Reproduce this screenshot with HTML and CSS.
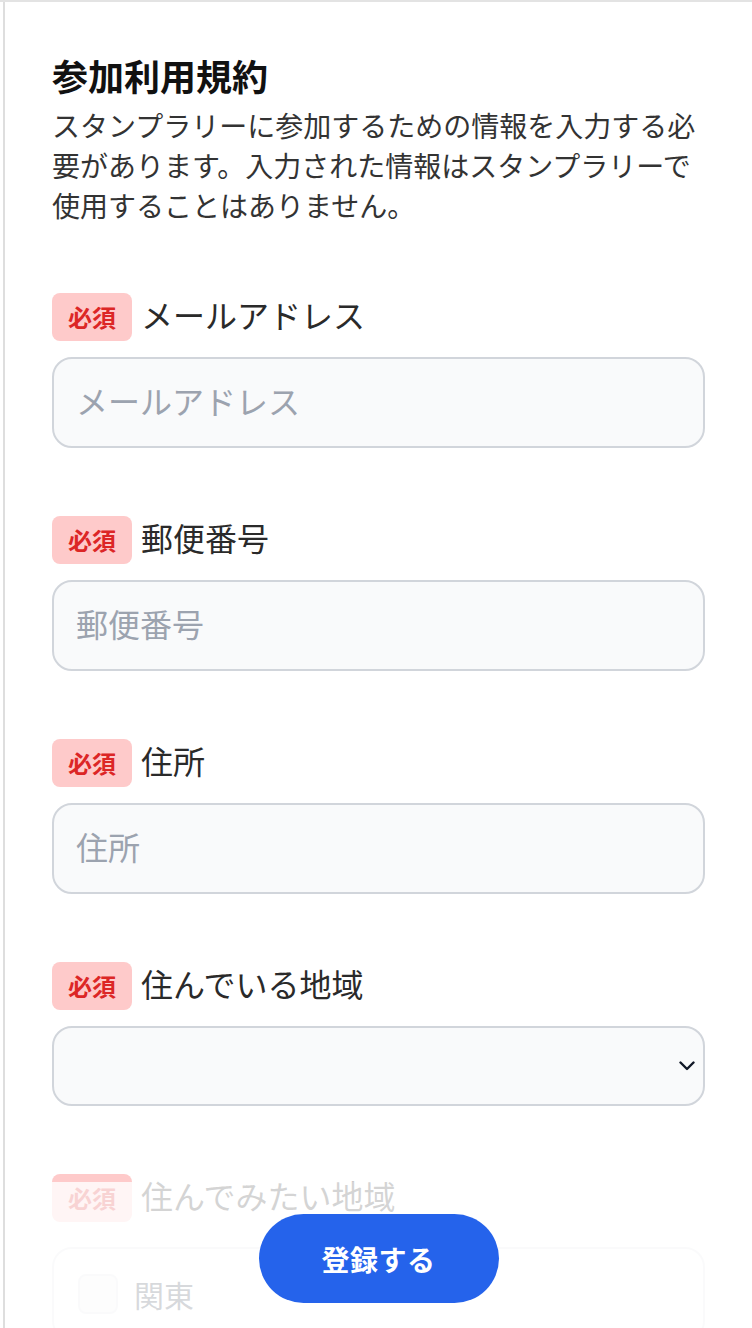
FILE: index.html
```html
<!DOCTYPE html>
<html lang="ja">
<head>
<meta charset="utf-8">
<title>参加利用規約</title>
<link rel="stylesheet" href="styles.css">
</head>
<body>
<div class="frame">
  <main class="card">
    <h1 class="title">参加利用規約</h1>
    <p class="desc">スタンプラリーに参加するための情報を入力する必要があります。入力された情報はスタンプラリーで使用することはありません。</p>

    <form class="form">
      <div class="field">
        <div class="label-row"><span class="badge">必須</span><span class="label">メールアドレス</span></div>
        <input class="input" type="text" placeholder="メールアドレス">
      </div>

      <div class="field">
        <div class="label-row"><span class="badge">必須</span><span class="label">郵便番号</span></div>
        <input class="input" type="text" placeholder="郵便番号">
      </div>

      <div class="field">
        <div class="label-row"><span class="badge">必須</span><span class="label">住所</span></div>
        <input class="input" type="text" placeholder="住所">
      </div>

      <div class="field">
        <div class="label-row"><span class="badge">必須</span><span class="label">住んでいる地域</span></div>
        <div class="select-wrap">
          <select class="select"><option></option></select>
          <svg class="chevron" width="16" height="10" viewBox="0 0 16 10" aria-hidden="true"><path d="M1.5 1.5 L8 8 L14.5 1.5" fill="none" stroke="#111827" stroke-width="2.4" stroke-linecap="round" stroke-linejoin="round"/></svg>
        </div>
      </div>

      <div class="field">
        <div class="label-row"><span class="badge">必須</span><span class="label">住んでみたい地域</span></div>
        <div class="group">
          <label class="check-row"><span class="checkbox"></span><span class="check-label">関東</span></label>
        </div>
      </div>
    </form>
  </main>
</div>
<div class="bottom-bar">
  <button class="submit" type="button">登録する</button>
</div>
</body>
</html>
```

FILE: styles.css
```css
html, body {
  margin: 0;
  padding: 0;
  overflow: hidden;
  background: #ffffff;
}

body {
  font-family: "Noto Sans CJK JP", "Noto Sans", sans-serif;
  color: #333333;
}

.frame {
  border-top: 2px solid #e3e3e3;
}

.card {
  margin-left: 3px;
  border-left: 2px solid #dedede;
  padding: 45px 47px 200px 47px;
}

.title {
  margin: 0;
  font-size: 36px;
  line-height: 56px;
  font-weight: 700;
  color: #111111;
}

.desc {
  margin: 2px 0 0 0;
  font-size: 28px;
  line-height: 40px;
  color: #333333;
}

.form {
  margin-top: 68px;
  display: flex;
  flex-direction: column;
  gap: 68px;
}

.field {
  display: flex;
  flex-direction: column;
}

.label-row {
  display: flex;
  align-items: center;
  gap: 9px;
  height: 48px;
}

.badge {
  background: #fecaca;
  color: #dc2626;
  font-size: 24px;
  line-height: 32px;
  font-weight: 700;
  padding: 8px 16px;
  border-radius: 8px;
}

.label {
  font-size: 32px;
  line-height: 48px;
  color: #2a2a2a;
  margin-top: -7px;
}

.input,
.select {
  box-sizing: border-box;
  width: 100%;
  margin: 16px 0 0 0;
  border: 2px solid #d1d5db;
  border-radius: 20px;
  background: #f9fafb;
  font-family: inherit;
  font-size: 32px;
  color: #111827;
  outline: none;
}

.input {
  height: 91px;
  padding: 0 22px 5px 22px;
}

.input::placeholder {
  color: #9ca3af;
}

.select-wrap {
  position: relative;
  margin-top: 16px;
}

.select {
  margin: 0;
  height: 80px;
  padding: 0 22px;
  appearance: none;
  -webkit-appearance: none;
  display: block;
}

.chevron {
  position: absolute;
  right: 10px;
  top: 35px;
}

.group {
  margin-top: 25px;
  border: 2px solid #e5e7eb;
  border-radius: 20px;
  padding: 25px 24px;
  display: flex;
  flex-direction: column;
  gap: 24px;
}

.check-row {
  display: flex;
  align-items: center;
  gap: 16px;
}

.checkbox {
  box-sizing: border-box;
  width: 40px;
  height: 40px;
  border-radius: 8px;
  background: #f3f4f6;
  border: 2px solid #e5e7eb;
}

.check-label {
  font-size: 30px;
  line-height: 40px;
  color: #374151;
}

.bottom-bar {
  position: fixed;
  left: 5px;
  right: 0;
  bottom: 0;
  height: 146px;
  box-sizing: border-box;
  padding-top: 32px;
  background: rgba(255, 255, 255, 0.8);
  display: flex;
  justify-content: center;
  align-items: flex-start;
}

.submit {
  width: 240px;
  height: 89px;
  border: none;
  border-radius: 999px;
  background: #2563eb;
  color: #ffffff;
  font-family: "Noto Sans CJK JP", "Noto Sans", sans-serif;
  font-size: 28px;
  font-weight: 700;
  letter-spacing: 0.5px;
}
```
